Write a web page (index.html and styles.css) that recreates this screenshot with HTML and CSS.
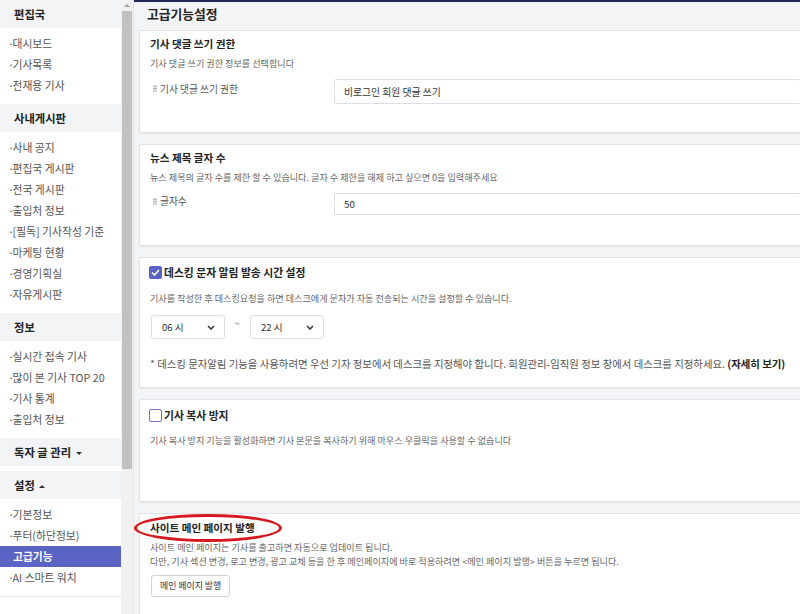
FILE: index.html
```html
<html>
<head>
    <link rel="stylesheet" href="styles.css">
</head>
<body>
    <div class="page">
        <aside class="sidebar">
            <div class="menu-group">
                <div class="menu-head">편집국</div>
                <ul class="menu-list">
                    <li>대시보드</li>
                    <li>기사목록</li>
                    <li>전재용 기사</li>
                </ul>
            </div>
            <div class="menu-group">
                <div class="menu-head">사내게시판</div>
                <ul class="menu-list">
                    <li>사내 공지</li>
                    <li>편집국 게시판</li>
                    <li>전국 게시판</li>
                    <li>출입처 정보</li>
                    <li>[필독] 기사작성 기준</li>
                    <li>마케팅 현황</li>
                    <li>경영기획실</li>
                    <li>자유게시판</li>
                </ul>
            </div>
            <div class="menu-group">
                <div class="menu-head">정보</div>
                <ul class="menu-list">
                    <li>실시간 접속 기사</li>
                    <li>많이 본 기사 TOP 20</li>
                    <li>기사 통계</li>
                    <li>출입처 정보</li>
                </ul>
            </div>
            <div class="menu-group closed">
                <div class="menu-head">독자 글 관리 <span class="caret-down"></span></div>
            </div>
            <div class="menu-group last">
                <div class="menu-head">설정 <span class="caret-up"></span></div>
                <ul class="menu-list">
                    <li>기본정보</li>
                    <li>푸터(하단정보)</li>
                    <li class="active">고급기능</li>
                    <li>AI 스마트 워치</li>
                </ul>
            </div>
        </aside>

        <div class="scroll-track">
            <div class="scroll-arrow"></div>
            <div class="scroll-thumb"></div>
        </div>

        <main class="content">
            <h2 class="page-title">고급기능설정</h2>

            <section class="card card-comment">
                <div class="card-title">기사 댓글 쓰기 권한</div>
                <div class="card-desc">기사 댓글 쓰기 권한 정보를 선택합니다</div>
                <div class="field-row">
                    <div class="field-label"><span class="grip"></span>기사 댓글 쓰기 권한</div>
                    <div class="field-box select-box">비로그인 회원 댓글 쓰기</div>
                </div>
            </section>

            <section class="card card-title-len">
                <div class="card-title">뉴스 제목 글자 수</div>
                <div class="card-desc">뉴스 제목의 글자 수를 제한 할 수 있습니다. 글자 수 제한을 해제 하고 싶으면 0을 입력해주세요</div>
                <div class="field-row">
                    <div class="field-label"><span class="grip"></span>글자수</div>
                    <div class="field-box text-input">50</div>
                </div>
            </section>

            <section class="card card-desking">
                <div class="check-title">
                    <span class="checkbox checked">
                        <svg width="9" height="7" viewBox="0 0 9 7"><polyline points="1,3.5 3.5,6 8,1" fill="none" stroke="#fff" stroke-width="1.6"/></svg>
                    </span>
                    데스킹 문자 알림 발송 시간 설정
                </div>
                <div class="card-desc desk-desc">기사를 작성한 후 데스킹요청을 하면 데스크에게 문자가 자동 전송되는 시간을 설정할 수 있습니다.</div>
                <div class="time-row">
                    <div class="time-select">06 시
                        <svg width="8" height="5" viewBox="0 0 8 5"><polyline points="1,1 4,4 7,1" fill="none" stroke="#333" stroke-width="1.5"/></svg>
                    </div>
                    <span class="tilde">~</span>
                    <div class="time-select">22 시
                        <svg width="8" height="5" viewBox="0 0 8 5"><polyline points="1,1 4,4 7,1" fill="none" stroke="#333" stroke-width="1.5"/></svg>
                    </div>
                </div>
                <div class="note">* 데스킹 문자알림 기능을 사용하려면 우선 기자 정보에서 데스크를 지정해야 합니다. 회원관리-임직원 정보 창에서 데스크를 지정하세요. <b>(자세히 보기)</b></div>
            </section>

            <section class="card card-copy">
                <div class="check-title">
                    <span class="checkbox"></span>
                    기사 복사 방지
                </div>
                <div class="card-desc copy-desc">기사 복사 방지 기능을 활성화하면 기사 본문을 복사하기 위해 마우스 우클릭을 사용할 수 없습니다</div>
            </section>

            <section class="card card-publish">
                <div class="card-title">사이트 메인 페이지 발행</div>
                <div class="mark-circle"></div>
                <div class="card-desc publish-desc">사이트 메인 페이지는 기사를 출고하면 자동으로 업데이트 됩니다.<br>다만, 기사 섹션 변경, 로고 변경, 광고 교체 등을 한 후 메인페이지에 바로 적용하려면 &lt;메인 페이지 발행&gt; 버튼을 누르면 됩니다.</div>
                <div class="btn">메인 페이지 발행</div>
            </section>
        </main>
    </div>
</body>
</html>
```

FILE: styles.css
```css
/* base */
html, body {
    margin: 0;
    padding: 0;
}

body {
    width: 800px;
    height: 614px;
    overflow: hidden;
    background-color: #f3f4f6;
    font-family: "Noto Sans CJK KR", "Noto Sans", sans-serif;
    color: #222;
}

.page {
    display: flex;
    height: 614px;
}

/* sidebar */
.sidebar {
    width: 121px;
    flex-shrink: 0;
    background-color: #fff;
}

.menu-head {
    height: 28px;
    line-height: 28px;
    padding-left: 14px;
    background-color: #f3f4f6;
    font-size: 11.3px;
    font-weight: bold;
    color: #222;
}

.menu-list {
    list-style: none;
    margin: 0;
    padding: 5px 0 8px;
}

.menu-list li {
    height: 21px;
    line-height: 21px;
    padding-left: 8px;
    font-size: 10.8px;
    color: #555;
    white-space: nowrap;
}

.menu-list li::before {
    content: "·";
    display: inline-block;
    width: 4.5px;
}

.menu-list li.active {
    padding-left: 13px;
    background-color: #5b63c5;
    color: #fff;
    font-weight: bold;
}

.menu-list li.active::before {
    content: "";
    width: 0;
}

.menu-group.closed {
    margin-bottom: 5px;
}

.menu-group.last {
    border-bottom: 1px solid #e4e6ea;
}

.caret-down, .caret-up {
    display: inline-block;
    width: 0;
    height: 0;
    margin-left: 2px;
    vertical-align: middle;
    border-left: 3px solid transparent;
    border-right: 3px solid transparent;
}

.caret-down {
    border-top: 3px solid #333;
}

.caret-up {
    border-bottom: 3px solid #333;
}

/* fake scrollbar */
.scroll-track {
    width: 12px;
    flex-shrink: 0;
    background-color: #f1f1f1;
    border-right: 1px solid #e2e4e8;
}

.scroll-arrow {
    width: 0;
    height: 0;
    margin: 4px auto 4px;
    border-left: 3px solid transparent;
    border-right: 3px solid transparent;
    border-bottom: 3px solid #a3a3a3;
}

.scroll-thumb {
    width: 10px;
    height: 458px;
    margin-left: 1px;
    background-color: #c1c1c1;
}

/* main */
.content {
    flex: 1;
    min-width: 0;
    border-top: 2px solid #22275a;
    padding-left: 5px;
    overflow: hidden;
}

.page-title {
    margin: 0;
    height: 28px;
    line-height: 24px;
    padding-left: 8px;
    font-size: 12.8px;
    font-weight: bold;
    color: #222;
}

.card {
    position: relative;
    margin: 0 -12px 11px 0;
    padding: 5px 10px 0;
    background-color: #fff;
    border: 1px solid #e1e3e7;
    border-radius: 2px;
    box-shadow: 0 1px 2px rgba(0, 0, 0, 0.06);
}

.card-title {
    height: 16px;
    line-height: 16px;
    font-size: 10.6px;
    font-weight: bold;
    color: #222;
}

.card-desc {
    margin-top: 4px;
    line-height: 14px;
    font-size: 9.1px;
    color: #666;
    white-space: nowrap;
}

.field-row {
    display: flex;
    align-items: center;
    margin-top: 9px;
}

.field-label {
    width: 181px;
    flex-shrink: 0;
    margin-top: -6px;
    padding-left: 3px;
    font-size: 9.7px;
    color: #555;
    display: flex;
    align-items: center;
}

.grip {
    width: 4px;
    height: 7px;
    margin-right: 3px;
    background-image: radial-gradient(circle, #aaa 0.8px, transparent 1px);
    background-size: 2px 2.4px;
}

.field-box {
    flex: 1;
    box-sizing: border-box;
    padding-left: 9px;
    border: 1px solid #dcdfe4;
    border-radius: 2px;
    font-size: 9.8px;
    color: #333;
    display: flex;
    align-items: center;
}

.select-box {
    height: 25px;
}

.text-input {
    height: 22px;
}

.card-comment {
    padding-bottom: 28px;
}

.card-title-len {
    padding-bottom: 30px;
}

/* checkbox cards */
.check-title {
    display: flex;
    align-items: center;
    height: 18px;
    margin-left: -1px;
    font-size: 10.8px;
    font-weight: bold;
    color: #222;
}

.checkbox {
    box-sizing: border-box;
    width: 13px;
    height: 13px;
    margin-right: 2px;
    border: 1.5px solid #7076b8;
    border-radius: 2px;
    background-color: #fff;
    display: flex;
    align-items: center;
    justify-content: center;
}

.checkbox.checked {
    border-color: #5b63c5;
    background-color: #5b63c5;
}

.desk-desc {
    margin-top: 10px;
}

.time-row {
    display: flex;
    align-items: center;
    margin-top: 10px;
}

.time-select {
    box-sizing: border-box;
    width: 74px;
    height: 24px;
    margin-left: 1px;
    padding: 0 9px 0 10px;
    border: 1px solid #dcdfe4;
    border-radius: 3px;
    font-size: 9.6px;
    color: #333;
    display: flex;
    align-items: center;
    justify-content: space-between;
}

.tilde {
    width: 24px;
    margin-top: -8px;
    text-align: center;
    font-size: 9px;
    color: #555;
}

.note {
    margin-top: 17px;
    line-height: 16px;
    font-size: 10.4px;
    color: #555;
    white-space: nowrap;
}

.note b {
    color: #222;
}

.card-desking {
    padding-bottom: 15px;
}

.card-copy {
    padding-top: 6px;
    padding-bottom: 54px;
}

.copy-desc {
    margin-top: 9px;
}

/* publish */
.card-publish {
    padding-top: 6px;
    padding-bottom: 20px;
    margin-bottom: 0;
}

.publish-desc {
    margin-top: 4px;
}

.btn {
    display: inline-block;
    box-sizing: border-box;
    height: 22px;
    line-height: 20px;
    margin-top: 7px;
    margin-left: 1px;
    padding: 0 8px;
    border: 1px solid #cfd2d7;
    border-radius: 3px;
    background-color: #fff;
    font-size: 8.9px;
    color: #333;
}

.mark-circle {
    position: absolute;
    left: -6px;
    top: 0;
    width: 142px;
    height: 22px;
    border: 3px solid #d7161e;
    border-radius: 50%;
}
```
